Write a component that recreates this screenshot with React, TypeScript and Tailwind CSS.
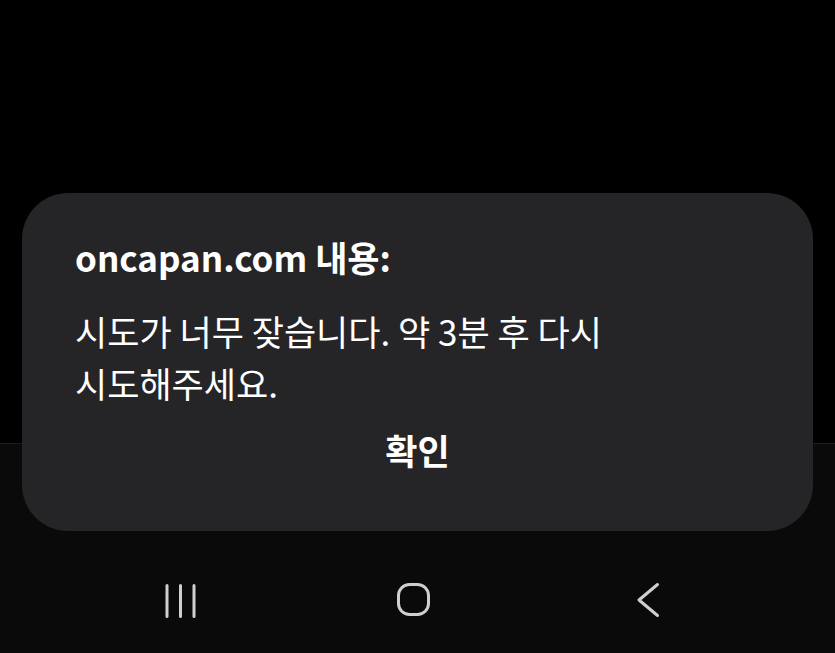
import React from 'react';

const font = { fontFamily: '"Noto Sans CJK KR", "Noto Sans", sans-serif' };

const NavBar: React.FC = () => (
    <div className="flex h-[210px] items-start gap-[198px] border-t border-[#1c1c1c] bg-[#0a0a0a] pl-[162px] pt-[138px]">
        <svg width="36" height="36" viewBox="0 0 36 36" fill="none" stroke="#cfcfcf" strokeWidth="3" strokeLinecap="round">
            <path d="M5 3.5v31M18.5 3.5v31M32 3.5v31" />
        </svg>
        <svg width="36" height="36" viewBox="0 0 36 36" fill="none" stroke="#cfcfcf" strokeWidth="3">
            <rect x="2.5" y="2.5" width="30" height="30" rx="11" />
        </svg>
        <svg width="36" height="36" viewBox="0 0 36 36" fill="none" stroke="#cfcfcf" strokeWidth="3" strokeLinecap="round" strokeLinejoin="round">
            <path d="M27.5 2.5L9 18l18.5 15.5" />
        </svg>
    </div>
);

export default function App() {
    return (
        <div className="relative h-[653px] w-[835px] overflow-hidden bg-black" style={font}>
            <div className="h-[443px] bg-black" />
            <NavBar />

            {/* alert dialog overlay */}
            <div className="absolute left-[22px] top-[193px] flex h-[338px] w-[791px] flex-col rounded-[46px] bg-[#252527] px-[53px] pt-[38px] text-white">
                <h2 className="text-[35px] font-bold leading-[52px]">oncapan.com 내용:</h2>
                <p className="mt-[22px] text-[35px] leading-[52px]">
                    시도가 너무 잦습니다. 약 3분 후 다시
                    <br />
                    시도해주세요.
                </p>
                <button className="mt-[15px] self-center text-[35px] font-bold leading-[52px]">확인</button>
            </div>
        </div>
    );
}
